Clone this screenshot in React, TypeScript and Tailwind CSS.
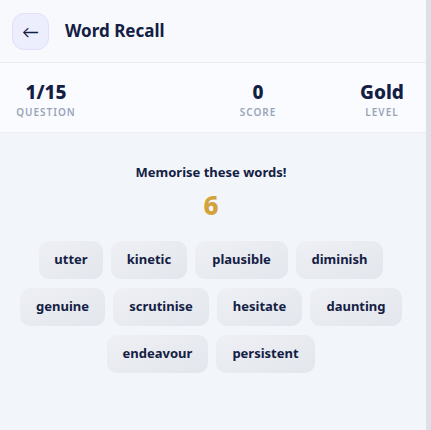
import React from "react";

const words: { w: string; width: number }[][] = [
  [
    { w: "utter", width: 64 },
    { w: "kinetic", width: 76 },
    { w: "plausible", width: 93 },
    { w: "diminish", width: 87 },
  ],
  [
    { w: "genuine", width: 85 },
    { w: "scrutinise", width: 96 },
    { w: "hesitate", width: 85 },
    { w: "daunting", width: 92 },
  ],
  [
    { w: "endeavour", width: 101 },
    { w: "persistent", width: 99 },
  ],
];

export default function App() {
  return (
    <div
      className="flex w-[431px] h-[430px] overflow-hidden bg-[#f2f5fa]"
      style={{ fontFamily: "'Noto Sans', Lato, sans-serif" }}
    >
      <div className="flex flex-col w-[426px] h-full">
        <div className="flex items-center h-[63px] px-[12px] bg-[#f8f9fd] border-b border-[#e9ebf1]">
          <div className="flex items-center justify-center w-[37px] h-[37px] rounded-[12px] bg-[#ecedfd] border border-[#dfe0fb] text-[#132043] text-[17px] leading-none">
            ←
          </div>
          <div className="ml-[16px] text-[17px] font-bold text-[#132043]">Word Recall</div>
        </div>
        <div className="flex items-center h-[70px] pl-[16px] pt-[4px] bg-[#fafbff] border-b border-[#eceef3]">
          <div className="w-[60px] flex flex-col items-center">
            <div className="text-[19px] font-extrabold leading-[24px] text-[#132043]">1/15</div>
            <div className="text-[10px] font-semibold tracking-[1px] text-[#9aa5b8] mt-[1px]">QUESTION</div>
          </div>
          <div className="w-[60px] ml-[152px] flex flex-col items-center">
            <div className="text-[19px] font-extrabold leading-[24px] text-[#132043]">0</div>
            <div className="text-[10px] font-semibold tracking-[1px] text-[#9aa5b8] mt-[1px]">SCORE</div>
          </div>
          <div className="w-[60px] ml-[64px] flex flex-col items-center">
            <div className="text-[19px] font-extrabold leading-[24px] text-[#132043]">Gold</div>
            <div className="text-[10px] font-semibold tracking-[1px] text-[#9aa5b8] mt-[1px]">LEVEL</div>
          </div>
        </div>
        <div className="flex flex-col items-center pt-[30px] pr-[4px]">
          <div className="text-[13px] font-bold text-[#132043] leading-[18px]">Memorise these words!</div>
          <div className="text-[26px] font-extrabold text-[#d4a23a] leading-[32px] mt-[8px]">6</div>
          <div className="flex flex-col items-center gap-[9px] mt-[20px]">
            {words.map((row, i) => (
              <div key={i} className="flex gap-[8px]">
                {row.map((c) => (
                  <div
                    key={c.w}
                    className="flex items-center justify-center h-[38px] rounded-[10px] bg-gradient-to-br from-[#eef0f5] to-[#e3e6ec] text-[13px] font-bold text-[#132043]"
                    style={{ width: c.width }}
                  >
                    {c.w}
                  </div>
                ))}
              </div>
            ))}
          </div>
        </div>
      </div>
      <div className="w-[5px] h-full bg-[#dde0e6]" />
    </div>
  );
}
